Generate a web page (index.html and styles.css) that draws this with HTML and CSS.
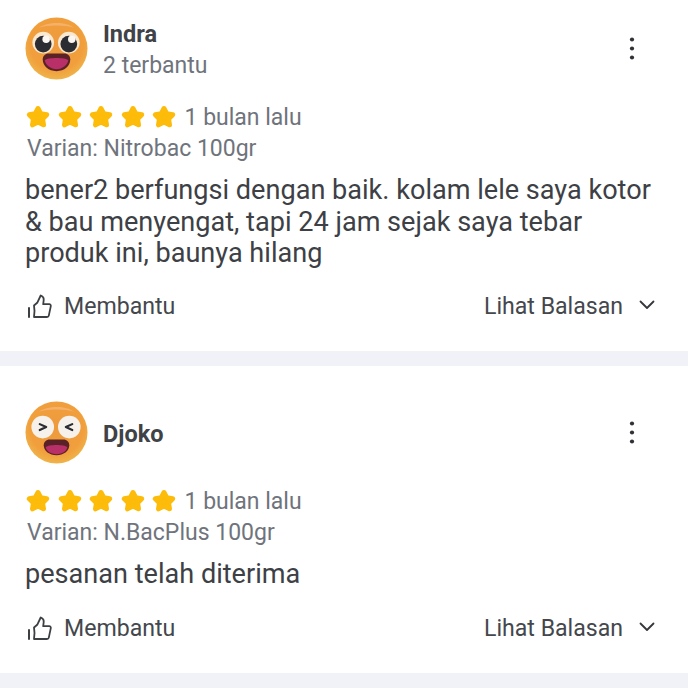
FILE: index.html
```html
<!DOCTYPE html>
<html>
<head>
  <title>Ulasan</title>
  <link rel="stylesheet" href="styles.css">
</head>
<body>
  <svg class="defs" width="0" height="0">
    <defs>
      <radialGradient id="face" cx="50%" cy="42%" r="58%">
        <stop offset="0" stop-color="#ee9a3e"/>
        <stop offset="0.75" stop-color="#f19f3c"/>
        <stop offset="1" stop-color="#efb44a"/>
      </radialGradient>
      <symbol id="star" viewBox="0 0 26 26">
        <path d="M13 4.500l2.800 5.300 5.900.9-4.200 4.200 1 5.900-5.500-2.700-5.500 2.700 1-5.900-4.200-4.200 5.900-.9z" fill="#fdbb0a" stroke="#fdbb0a" stroke-width="5" stroke-linejoin="round"/>
      </symbol>
      <symbol id="thumb" viewBox="0 0 26 26">
        <path d="M2 14v9" fill="none" stroke="#3d4043" stroke-width="2" stroke-linecap="round"/>
        <path d="M7 23h13c1 0 1.600-.5 1.800-1.400l2-9.500c.2-1.100-.5-1.900-1.600-1.900h-6l.5-4c.2-1.600-.6-3.400-2-4.200l-1-.5-3.500 7.300-3.200 2.700c.7 3.600.7 7.500 0 11.500z" fill="none" stroke="#3d4043" stroke-width="1.800" stroke-linejoin="round" stroke-linecap="round"/>
      </symbol>
      <symbol id="chevron" viewBox="0 0 18 18">
        <path d="M2.500 5.500l6.500 6.500 6.500-6.500" fill="none" stroke="#34373b" stroke-width="1.800" stroke-linecap="round" stroke-linejoin="round"/>
      </symbol>
      <symbol id="dots" viewBox="0 0 8 28">
        <circle cx="4" cy="4.500" r="2.100" fill="#2f3237"/>
        <circle cx="4" cy="13.500" r="2.100" fill="#2f3237"/>
        <circle cx="4" cy="22.500" r="2.100" fill="#2f3237"/>
      </symbol>
    </defs>
  </svg>

  <div class="review review-first">
    <div class="review-head">
      <svg class="avatar" viewBox="0 0 64 64">
        <circle cx="32" cy="32" r="31.500" fill="url(#face)"/>
        <path d="M14 11c8-6 27-7 36 0-9-3-27-3-36 0z" fill="#f5b06a"/>
        <circle cx="18.500" cy="26" r="11" fill="#fae8cf"/>
        <circle cx="44.500" cy="26" r="11" fill="#fae8cf"/>
        <circle cx="18.500" cy="27.500" r="8.500" fill="#2b2d33"/>
        <circle cx="44.500" cy="27.500" r="8.500" fill="#2b2d33"/>
        <circle cx="21.500" cy="22.500" r="3.800" fill="#fbf7f0"/>
        <circle cx="47.500" cy="22.500" r="3.800" fill="#fbf7f0"/>
        <path d="M18 43c0-3.500 2.500-6 6-6h16c3.500 0 6 2.500 6 6 0 7-6 12-14 12s-14-5-14-12z" fill="#5a2226"/>
        <path d="M20 44c3-3 21-3 24 0-1 5-6 9-12 9s-11-4-12-9z" fill="#b92f68"/>
      </svg>
      <div class="user">
        <div class="user-name">Indra</div>
        <div class="user-helped">2 terbantu</div>
      </div>
      <svg class="more"><use href="#dots"/></svg>
    </div>
    <div class="rating">
      <svg class="star"><use href="#star"/></svg>
      <svg class="star"><use href="#star"/></svg>
      <svg class="star"><use href="#star"/></svg>
      <svg class="star"><use href="#star"/></svg>
      <svg class="star"><use href="#star"/></svg>
      <span class="rating-time">1 bulan lalu</span>
    </div>
    <div class="variant">Varian: Nitrobac 100gr</div>
    <p class="comment">bener2 berfungsi dengan baik. kolam lele saya kotor &amp; bau menyengat, tapi 24 jam sejak saya tebar produk ini, baunya hilang</p>
    <div class="actions">
      <div class="helpful"><svg class="thumb"><use href="#thumb"/></svg>Membantu</div>
      <div class="replies">Lihat Balasan<svg class="chevron"><use href="#chevron"/></svg></div>
    </div>
  </div>

  <div class="review review-second">
    <div class="review-head">
      <svg class="avatar" viewBox="0 0 64 64">
        <circle cx="32" cy="32" r="31.500" fill="url(#face)"/>
        <path d="M14 11c8-6 27-7 36 0-9-3-27-3-36 0z" fill="#f5b06a"/>
        <circle cx="18" cy="26.500" r="11.500" fill="#f6f1ea"/>
        <circle cx="45" cy="26.500" r="11.500" fill="#f6f1ea"/>
        <path d="M15 23.500l6.500 3-6.500 3M48 23.500l-6.500 3 6.500 3" fill="none" stroke="#2b2d33" stroke-width="2.200" stroke-linecap="round" stroke-linejoin="round"/>
        <path d="M19 45c0-3.500 2.500-6 6-6h14c3.500 0 6 2.500 6 6 0 6-6 10-13 10s-13-4-13-10z" fill="#5a2226"/>
        <path d="M21 47c3-3 19-3 22 0-1 4-5 7-11 7s-10-3-11-7z" fill="#b92f68"/>
      </svg>
      <div class="user">
        <div class="user-name">Djoko</div>
      </div>
      <svg class="more"><use href="#dots"/></svg>
    </div>
    <div class="rating">
      <svg class="star"><use href="#star"/></svg>
      <svg class="star"><use href="#star"/></svg>
      <svg class="star"><use href="#star"/></svg>
      <svg class="star"><use href="#star"/></svg>
      <svg class="star"><use href="#star"/></svg>
      <span class="rating-time">1 bulan lalu</span>
    </div>
    <div class="variant">Varian: N.BacPlus 100gr</div>
    <p class="comment">pesanan telah diterima</p>
    <div class="actions">
      <div class="helpful"><svg class="thumb"><use href="#thumb"/></svg>Membantu</div>
      <div class="replies">Lihat Balasan<svg class="chevron"><use href="#chevron"/></svg></div>
    </div>
  </div>
</body>
</html>
```

FILE: styles.css
```css
body {
  margin: 0;
  background-color: #f0f2f7;
  font-family: Roboto, "Liberation Sans", sans-serif;
  color: #34373c;
}
.defs {
  position: absolute;
}
.review {
  background-color: #fff;
  padding: 17px 25px 0 25px;
  box-sizing: border-box;
  margin-bottom: 15px;
}
.review-first {
  height: 351px;
}
.review-second {
  height: 307px;
  padding-top: 35px;
}
.review-head {
  display: flex;
  align-items: center;
  height: 63px;
}
.avatar {
  width: 63px;
  height: 63px;
  flex-shrink: 0;
}
.user {
  margin-left: 15px;
  padding-top: 3px;
  flex: 1;
}
.user-name {
  font-size: 23.500px;
  font-weight: 700;
  line-height: 32px;
  color: #3f4247;
}
.user-helped {
  font-size: 23px;
  line-height: 32px;
  color: #6f747c;
}
.more {
  width: 8px;
  height: 28px;
  margin-right: 27px;
}
.rating {
  display: flex;
  align-items: center;
  margin-top: 21px;
  height: 32px;
}
.star {
  width: 26px;
  height: 26px;
  margin-right: 5.500px;
}
.rating-time {
  font-size: 23px;
  color: #6f747c;
  margin-left: 2px;
}
.variant {
  font-size: 23px;
  line-height: 32px;
  color: #6f747c;
  margin-left: 2px;
}
.comment {
  margin: 10px 0 0 0;
  font-size: 27.100px;
  line-height: 31.500px;
  color: #3d4045;
}
.actions {
  display: flex;
  justify-content: space-between;
  align-items: center;
  margin-top: 21px;
  font-size: 23.100px;
  line-height: 32px;
  color: #44474c;
}
.review-second .actions {
  margin-top: 22px;
}
.helpful,
.replies {
  display: flex;
  align-items: center;
}
.thumb {
  width: 26px;
  height: 26px;
  margin: 0 11px 0 2px;
}
.chevron {
  width: 18px;
  height: 18px;
  margin: -3px 7px 0 15px;
}
```
